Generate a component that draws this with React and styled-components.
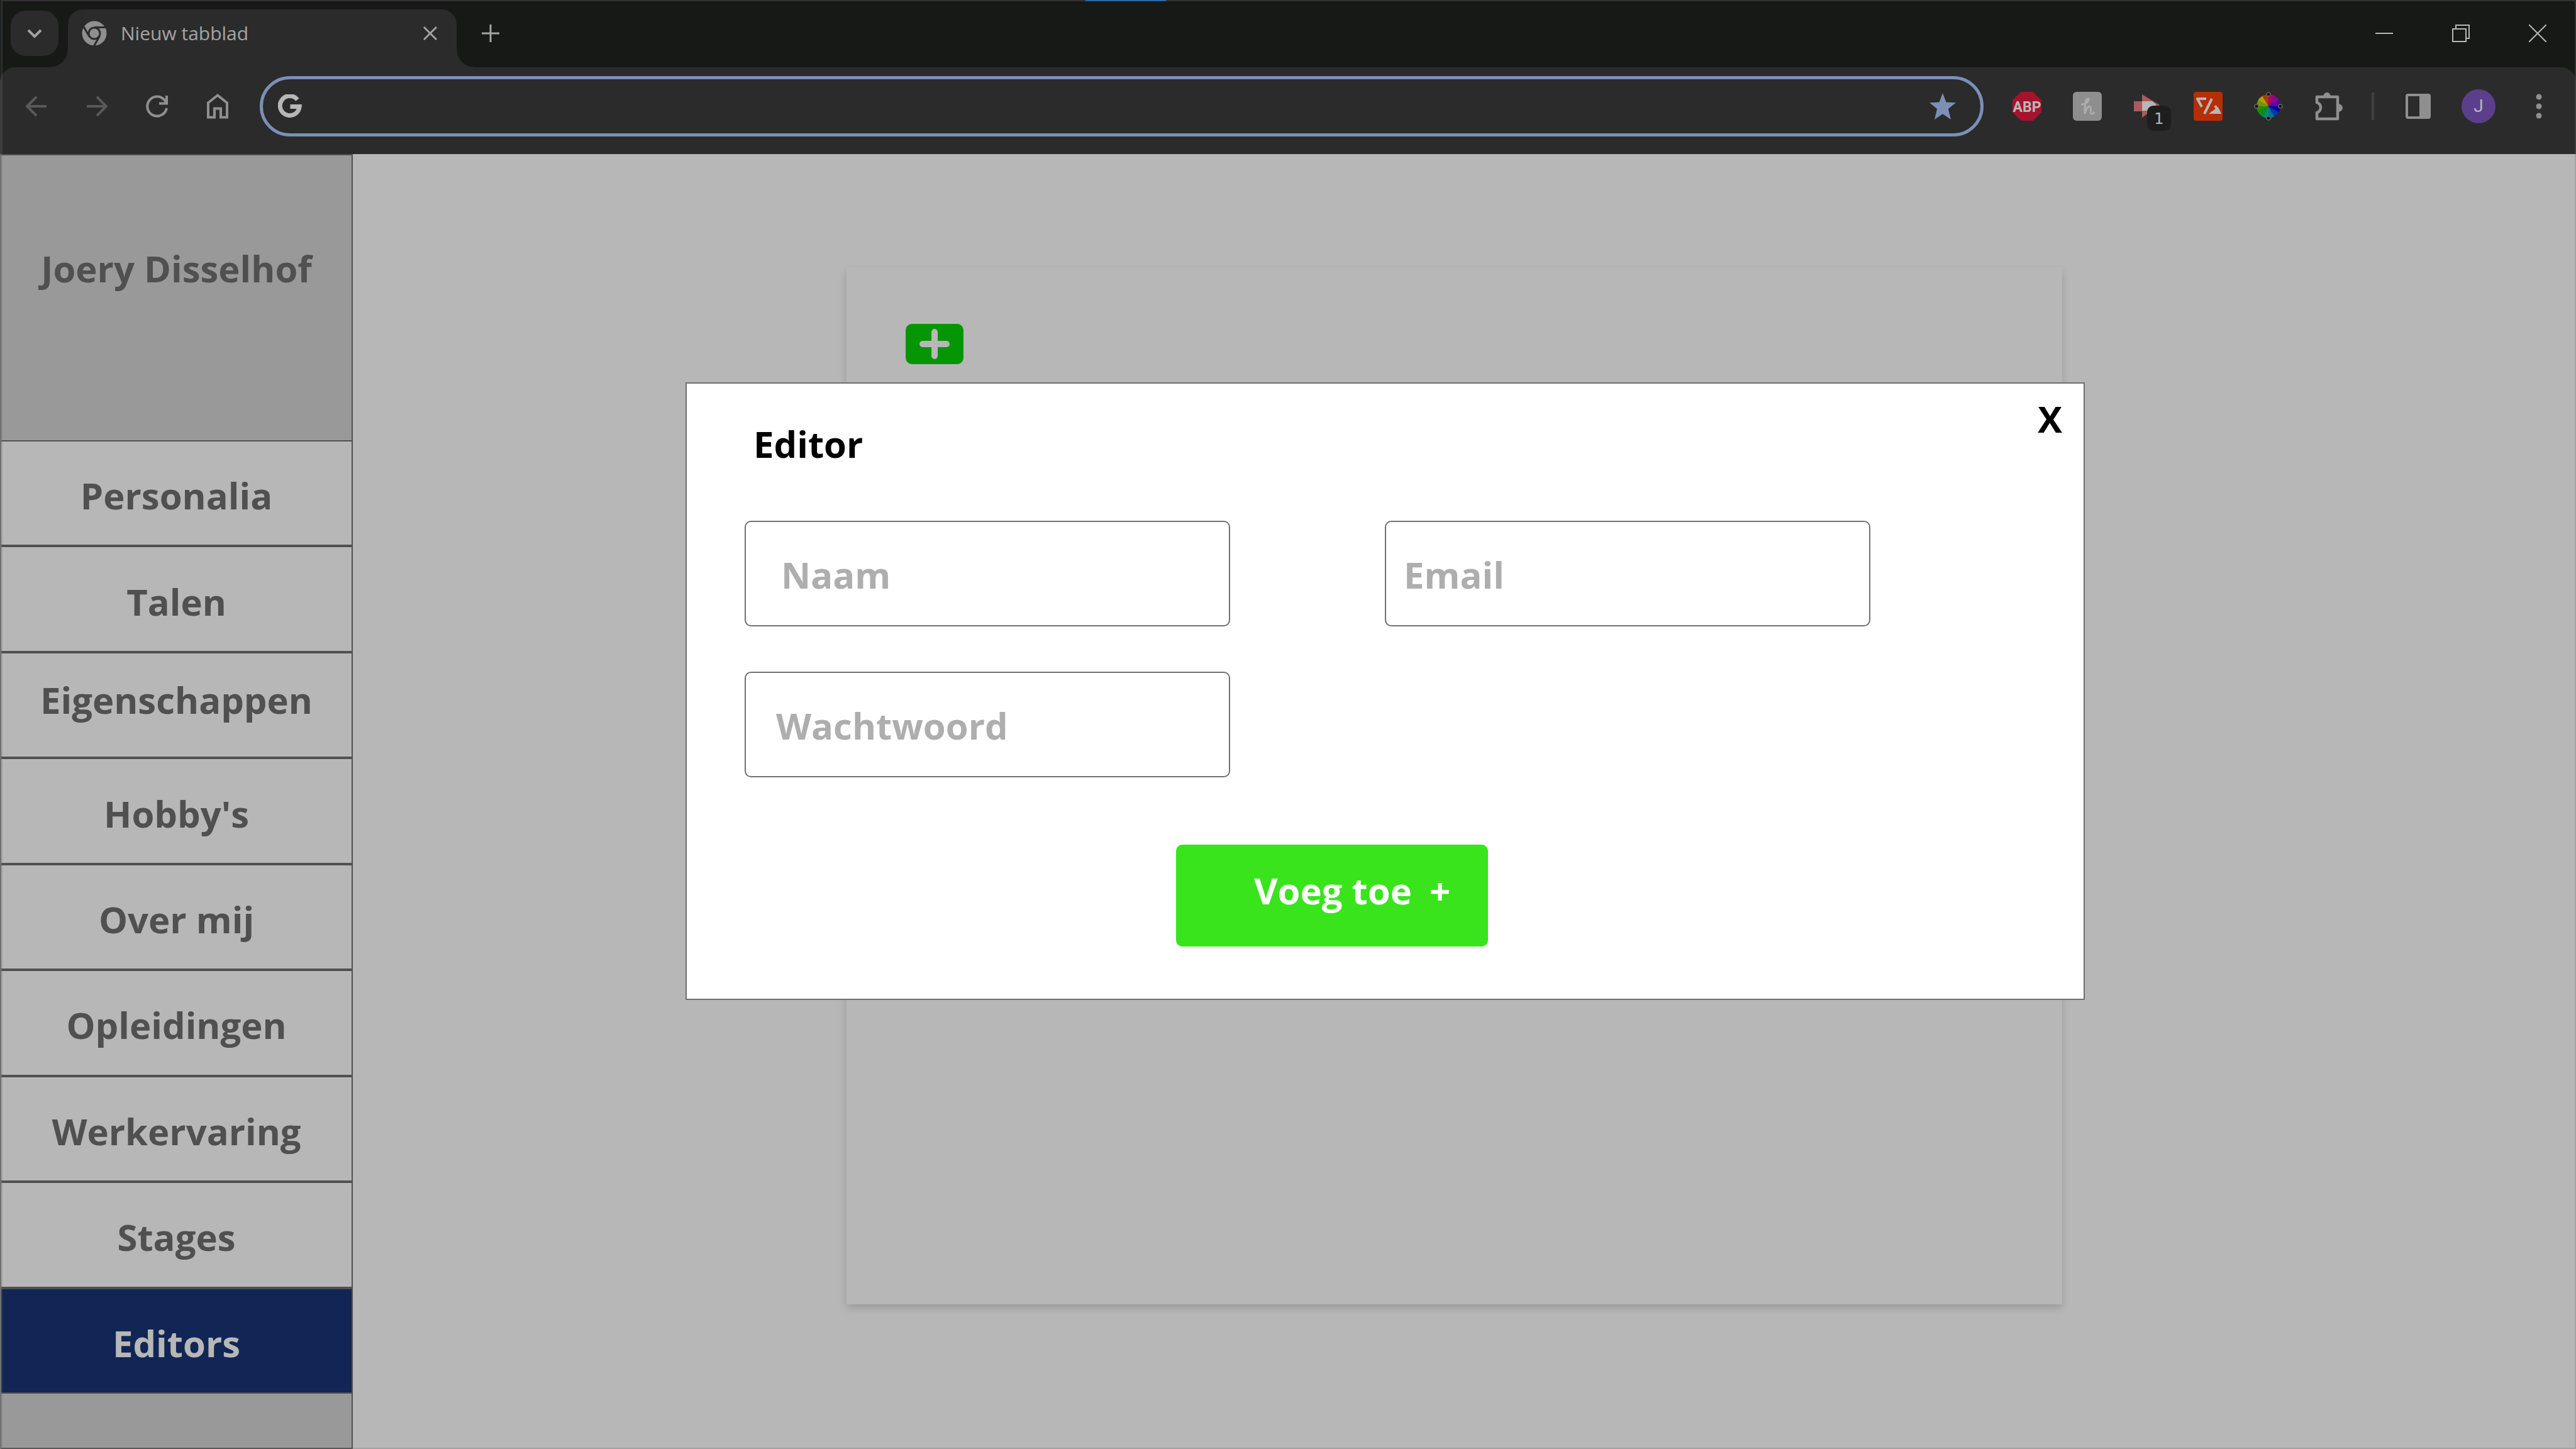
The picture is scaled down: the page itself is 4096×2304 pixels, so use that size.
import React from "react";
import styled, { createGlobalStyle } from "styled-components";

const Global = createGlobalStyle`
  * { box-sizing: border-box; }
  html, body { margin: 0; background: #ffffff; }
  body, button, input { font-family: "Open Sans", "Noto Sans", sans-serif; }
  button { border: 0; padding: 0; background: none; color: inherit; cursor: pointer; }
`;

const Screen = styled.div`
  position: relative;
  min-height: 100vh;
  display: flex;
  flex-direction: column;
  overflow: hidden;
`;

/* ---------- browser frame ---------- */

const TabStrip = styled.header`
  height: 107px;
  padding: 15px 0 0 15px;
  display: flex;
  background: #202321;
  color: #ffffff;
`;

const LoadMark = styled.span`
  position: absolute;
  top: 0;
  left: 1726px;
  width: 128px;
  height: 2px;
  background: #1c8bfe;
`;

const TabSearch = styled.button`
  width: 76px;
  height: 72px;
  margin: 2px 15px 0 2px;
  border-radius: 24px;
  display: grid;
  place-items: center;
  background: #3c3c3c;
`;

const Tab = styled.div`
  position: relative;
  width: 618px;
  height: 92px;
  padding: 0 28px 16px 22px;
  display: flex;
  align-items: center;
  border-radius: 24px 24px 0 0;
  background: #3c3c3c;

  &::before, &::after {
    content: "";
    position: absolute;
    bottom: 0;
    width: 28px;
    height: 28px;
  }
  &::before {
    right: 100%;
    background: radial-gradient(circle at 0 0, transparent 27px, #3c3c3c 28px);
  }
  &::after {
    left: 100%;
    background: radial-gradient(circle at 100% 0, transparent 27px, #3c3c3c 28px);
  }
`;

const TabTitle = styled.span`
  flex: 1;
  margin-left: 22px;
  font-size: 30px;
  line-height: 40px;
  color: #e3e3e3;
`;

const IconButton = styled.button`
  width: ${(p) => p.$w || 48}px;
  height: ${(p) => p.$h || 48}px;
  flex: none;
  display: grid;
  place-items: center;
`;

const WindowControls = styled.div`
  margin-left: auto;
  display: flex;
  height: 76px;
  align-items: center;
`;

const Toolbar = styled.div`
  height: 138px;
  padding: 0 11px 14px 10px;
  display: flex;
  align-items: center;
  border-radius: 24px 24px 0 0;
  background: #3c3c3c;
`;

const ToolbarBack = styled.div`
  background: #202321;
`;

const Omnibox = styled.label`
  flex: 1;
  height: 96px;
  margin: 0 21px 0 19px;
  padding: 0 38px 0 24px;
  display: flex;
  align-items: center;
  border: 5px solid #aac9ff;
  border-radius: 48px;
`;

const Address = styled.input`
  flex: 1;
  min-width: 0;
  height: 64px;
  margin: 0 16px;
  border: 0;
  outline: 0;
  background: transparent;
  color: #ffffff;
  font-size: 32px;
`;

const ExtButton = styled.button`
  position: relative;
  width: 96px;
  height: 96px;
  flex: none;
  display: grid;
  place-items: center;
`;

const Badge = styled.span`
  position: absolute;
  left: 47px;
  top: 47px;
  width: 38px;
  height: 40px;
  border-radius: 10px;
  background: #2a2a2a;
  color: #ffffff;
  font: 24px/42px "DejaVu Sans", sans-serif;
  text-align: center;
`;

const Divider = styled.span`
  width: 4px;
  height: 44px;
  margin: 0 22px 0 20px;
  background: #5a5a5a;
`;

const Avatar = styled.span`
  width: 54px;
  height: 54px;
  border-radius: 50%;
  background: #8058c4;
  color: #ffffff;
  font: 28px/54px Roboto, sans-serif;
`;

/* ---------- page ---------- */

const Page = styled.div`
  flex: 1;
  display: flex;
`;

const Sidebar = styled.aside`
  width: 561px;
  flex: none;
  display: flex;
  flex-direction: column;
  border: 2px solid #707070;
  background: #d5d5d5;
  color: #707070;
  font-size: 58px;
  font-weight: 700;
`;

const Owner = styled.div`
  height: 453px;
  padding-top: 138px;
  line-height: 84px;
  text-align: center;
`;

const Menu = styled.nav`
  flex: 1;
  display: flex;
  flex-direction: column;
  margin-bottom: 86px;
`;

const MenuLink = styled.a`
  flex: 1;
  display: flex;
  align-items: center;
  justify-content: center;
  padding: ${(p) => (p.$raised ? "0 0 16px" : "12px 0 4px")};
  border: solid #707070;
  border-width: 2px 0;
  background: ${(p) => (p.$active ? "#193576" : "#ffffff")};
  color: ${(p) => (p.$active ? "#ffffff" : "inherit")};
  line-height: 84px;
  text-decoration: none;
`;

const Main = styled.main`
  flex: 1;
  padding: 180px 817px 230px 785px;
  display: flex;
`;

const Sheet = styled.section`
  flex: 1;
  padding: 90px 94px;
  background: #ffffff;
  box-shadow: 0 6px 12px rgba(0, 0, 0, 0.16);
`;

const AddButton = styled.button`
  width: 92px;
  height: 64px;
  display: grid;
  place-items: center;
  border-radius: 10px;
  background: #08d207;
`;

/* ---------- dialog ---------- */

const Backdrop = styled.div`
  position: absolute;
  inset: 0 0 0 2px;
  padding: 606px 779px 0 1086px;
  border: 2px solid rgba(112, 112, 112, 0.283);
  background: rgba(0, 0, 0, 0.283);
`;

const Dialog = styled.form`
  padding: 20px 34px 83px 92px;
  border: 2px solid #707070;
  background: #ffffff;
`;

const DialogHead = styled.div`
  display: flex;
  justify-content: space-between;
  height: 198px;
`;

const Title = styled.h1`
  margin: 34px 0 0 14px;
  font-size: 58px;
  line-height: 84px;
  color: #000000;
`;

const CloseButton = styled.button`
  height: 72px;
  font-size: 58px;
  font-weight: 700;
  line-height: 72px;
  color: #000000;
`;

const Fields = styled.div`
  display: grid;
  grid-template-columns: 772px 772px;
  gap: 72px 246px;
`;

const Field = styled.input`
  height: 168px;
  padding: 2px 24px 0 ${(p) => p.$inset}px;
  border: 2px solid #707070;
  border-radius: 10px;
  outline: 0;
  background: #ffffff;
  color: #000000;
  font-size: 58px;
  font-weight: 700;

  &::placeholder {
    color: #aeaeae;
    opacity: 1;
  }
`;

const Submit = styled.button`
  display: flex;
  align-items: center;
  justify-content: center;
  gap: 28px;
  width: 496px;
  height: 162px;
  margin: 107px 0 0 686px;
  padding: 0 0 18px 64px;
  border-radius: 10px;
  background: #39e41d;
  color: #ffffff;
  font-size: 58px;
  font-weight: 700;
`;

const line = { fill: "none", stroke: "#c7c7c7" };

const menu = [
  { label: "Personalia" },
  { label: "Talen" },
  { label: "Eigenschappen", raised: true },
  { label: "Hobby's" },
  { label: "Over mij" },
  { label: "Opleidingen" },
  { label: "Werkervaring" },
  { label: "Stages" },
  { label: "Editors", active: true },
];

const fields = [
  { name: "Naam", type: "text", inset: 56 },
  { name: "Email", type: "email", inset: 28 },
  { name: "Wachtwoord", type: "password", inset: 48 },
];

const wheel = ["#f0009a", "#c400e0", "#7a00e0", "#0000e0", "#0050e0", "#00a0d0", "#00c890", "#00c830", "#30c800", "#a0d000", "#f0e000", "#f05000"];

function ChromeLogo() {
  return (
    <svg width="40" height="40" viewBox="0 0 40 40">
      <circle cx="20" cy="20" r="14" fill="none" stroke="#c7c7c7" strokeWidth="11" />
      <g stroke="#3c3c3c" strokeWidth="3">
        <path d="M20 10.500H38M11.800 24.800L3 9.500M28.200 24.800L19.500 40" />
      </g>
      <circle cx="20" cy="20" r="10.500" fill="#3c3c3c" />
      <circle cx="20" cy="20" r="7.500" fill="#c7c7c7" />
    </svg>
  );
}

function Back({ flip }) {
  return (
    <svg width="34" height="34" viewBox="0 0 34 34" {...line} stroke="#7c7c7c" strokeWidth="4">
      <path d={flip ? "M1 17H31M17 2L32 17L17 32" : "M33 17H3M17 2L2 17L17 32"} />
    </svg>
  );
}

function Reload() {
  return (
    <svg width="36" height="36" viewBox="0 0 36 36" {...line} strokeWidth="4">
      <path d="M33 21A15.500 15.500 0 1 1 30 8.500L33 13" />
      <path d="M33 1V13.500H21" />
    </svg>
  );
}

function Home() {
  return (
    <svg width="36" height="42" viewBox="0 0 36 42" {...line} strokeWidth="4">
      <path d="M3 15.500L18 3.500L33 15.500V38.500H23V24.500H13V38.500H3Z" />
    </svg>
  );
}

function GoogleMark() {
  return (
    <svg width="38" height="38" viewBox="0 0 38 38" fill="none" stroke="#ffffff" strokeWidth="7">
      <path d="M31 8.500A15.500 15.500 0 1 0 34.200 19.500H19.500" />
    </svg>
  );
}

function Star() {
  return (
    <svg width="44" height="44" viewBox="0 0 44 44" fill="#aac9ff">
      <path d="M22 1L27.500 15.600L43 16.300L30.900 26L35 43L22 34.200L9 43L13.100 26L1 16.300L16.500 15.600Z" />
    </svg>
  );
}

function Abp() {
  return (
    <svg width="46" height="46" viewBox="0 0 46 46">
      <path d="M13.500 0H32.500L46 13.500V32.500L32.500 46H13.500L0 32.500V13.500Z" fill="#e91a3f" />
      <text x="23" y="32" textAnchor="middle" fill="#ffffff" fontFamily="Roboto, sans-serif" fontWeight="700" fontSize="23">ABP</text>
    </svg>
  );
}

function Honey() {
  return (
    <svg width="46" height="46" viewBox="0 0 46 46" fill="none">
      <rect width="46" height="46" rx="6" fill="#c6c6c6" />
      <path d="M13 20C23 20 28 11 24 11C19 11 19 24 19 35C21 26 26 21 28 24C30 28 26 35 30 35C32 35 33 34 34 32" stroke="#f2f2f2" strokeWidth="3" />
    </svg>
  );
}

function RedArrow() {
  return (
    <svg width="46" height="46" viewBox="0 0 46 46">
      <path d="M1 15H14V4L42 21L14 41V31H1Z" fill="#ee7f7f" />
      <path d="M14 15H30L36 20V30H14Z" fill="#ffffff" />
    </svg>
  );
}

function OrangeTag() {
  return (
    <svg width="46" height="46" viewBox="0 0 46 46" fill="none" stroke="#ffffff" strokeWidth="4">
      <rect width="46" height="46" rx="4" fill="#fb4202" stroke="none" />
      <path d="M29 11L17 35M20 11H6L13 24M34 22L41 33H28" strokeLinejoin="round" />
      <path d="M38 27L41 33H30Z" fill="#ffffff" />
    </svg>
  );
}

function ColorWheel() {
  const point = (a) => `${23 + 19 * Math.sin(a)} ${23 - 19 * Math.cos(a)}`;
  return (
    <svg width="46" height="46" viewBox="0 0 46 46">
      {wheel.map((c, i) => {
        const step = Math.PI / 6;
        return <path key={c} d={`M23 23L${point(i * step)}A19 19 0 0 1 ${point((i + 1) * step)}Z`} fill={c} />;
      })}
      <g fill="#111111" stroke="#8a8a8a" strokeWidth="1.500">
        <circle cx="23" cy="4" r="3" />
        <circle cx="23" cy="42" r="3" />
        <circle cx="4" cy="23" r="3" />
        <circle cx="42" cy="23" r="3" />
      </g>
    </svg>
  );
}

function Puzzle() {
  return (
    <svg width="46" height="48" viewBox="0 0 46 48">
      <path d="M4 18V9H37V44H4V34C12 32 12 20 4 18Z" {...line} strokeWidth="4.500" strokeLinejoin="round" />
      <path d="M14 9A6 7 0 0 1 26 9ZM38 20A7 6.500 0 0 1 38 33Z" fill="#c7c7c7" />
    </svg>
  );
}

function SidePanel() {
  return (
    <svg width="40" height="40" viewBox="0 0 40 40">
      <rect x="2" y="2" width="36" height="36" rx="2" {...line} strokeWidth="4" />
      <path d="M22 2H38V38H22Z" fill="#c7c7c7" />
    </svg>
  );
}

function Dots() {
  return (
    <svg width="12" height="40" viewBox="0 0 12 40" fill="#c7c7c7">
      <circle cx="6" cy="5" r="4.500" />
      <circle cx="6" cy="20" r="4.500" />
      <circle cx="6" cy="35" r="4.500" />
    </svg>
  );
}

function Stroke({ size, width, d, color = "#e3e3e3" }) {
  return (
    <svg width={size} height={size} viewBox={`0 0 ${size} ${size}`} fill="none" stroke={color} strokeWidth={width}>
      <path d={d} />
    </svg>
  );
}

function Browser() {
  return (
    <>
      <TabStrip>
        <LoadMark />
        <TabSearch aria-label="Tabbladen zoeken">
          <Stroke size={24} width={4} d="M2 7L12 17L22 7" />
        </TabSearch>
        <Tab>
          <ChromeLogo />
          <TabTitle>Nieuw tabblad</TabTitle>
          <IconButton $w={28} aria-label="Tabblad sluiten">
            <Stroke size={24} width={3} d="M2 2L22 22M22 2L2 22" />
          </IconButton>
        </Tab>
        <IconButton $w={108} $h={76} aria-label="Nieuw tabblad">
          <Stroke size={28} width={3} d="M14 0V28M0 14H28" />
        </IconButton>
        <WindowControls>
          <IconButton $w={122} aria-label="Minimaliseren">
            <Stroke size={28} width={2} color="#ffffff" d="M0 14H28" />
          </IconButton>
          <IconButton $w={122} aria-label="Herstellen">
            <Stroke size={28} width={2} color="#ffffff" d="M1 7H22V27H1ZM6 7V1H27V22H22" />
          </IconButton>
          <IconButton $w={122} aria-label="Sluiten">
            <Stroke size={28} width={2} color="#ffffff" d="M0 0L28 28M28 0L0 28" />
          </IconButton>
        </WindowControls>
      </TabStrip>
      <ToolbarBack>
        <Toolbar>
          <IconButton $w={96} aria-label="Vorige"><Back /></IconButton>
          <IconButton $w={96} aria-label="Volgende"><Back flip /></IconButton>
          <IconButton $w={96} aria-label="Vernieuwen"><Reload /></IconButton>
          <IconButton $w={96} aria-label="Startpagina"><Home /></IconButton>
          <Omnibox>
            <GoogleMark />
            <Address aria-label="Adresbalk" />
            <Star />
          </Omnibox>
          <ExtButton aria-label="Adblock Plus"><Abp /></ExtButton>
          <ExtButton aria-label="Honey"><Honey /></ExtButton>
          <ExtButton aria-label="Meldingen"><RedArrow /><Badge>1</Badge></ExtButton>
          <ExtButton aria-label="Kortingen"><OrangeTag /></ExtButton>
          <ExtButton aria-label="Kleurkiezer"><ColorWheel /></ExtButton>
          <ExtButton aria-label="Extensies"><Puzzle /></ExtButton>
          <Divider />
          <ExtButton aria-label="Zijvenster"><SidePanel /></ExtButton>
          <ExtButton aria-label="Profiel"><Avatar>J</Avatar></ExtButton>
          <ExtButton aria-label="Meer"><Dots /></ExtButton>
        </Toolbar>
      </ToolbarBack>
    </>
  );
}

export default function App() {
  return (
    <Screen>
      <Global />
      <Browser />
      <Page>
        <Sidebar>
          <Owner>Joery Disselhof</Owner>
          <Menu>
            {menu.map((item) => (
              <MenuLink key={item.label} href="#" $active={item.active} $raised={item.raised}>
                {item.label}
              </MenuLink>
            ))}
          </Menu>
        </Sidebar>
        <Main>
          <Sheet>
            <AddButton aria-label="Toevoegen">
              <svg width="48" height="48" viewBox="0 0 48 48" stroke="#ffffff" strokeWidth="10" strokeLinecap="round">
                <path d="M24 5V43M5 24H43" />
              </svg>
            </AddButton>
          </Sheet>
        </Main>
      </Page>
      <Backdrop>
        <Dialog role="dialog" aria-label="Editor">
          <DialogHead>
            <Title>Editor</Title>
            <CloseButton type="button">X</CloseButton>
          </DialogHead>
          <Fields>
            {fields.map((f) => (
              <Field key={f.name} type={f.type} placeholder={f.name} aria-label={f.name} $inset={f.inset} />
            ))}
          </Fields>
          <Submit type="button">
            <span>Voeg toe</span>
            <span>+</span>
          </Submit>
        </Dialog>
      </Backdrop>
    </Screen>
  );
}
